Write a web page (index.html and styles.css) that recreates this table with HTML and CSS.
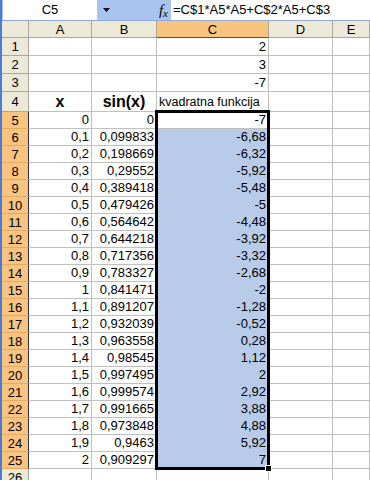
FILE: index.html
```html
<!DOCTYPE html>
<html>
<head>
<meta charset="utf-8">
<link rel="stylesheet" href="styles.css">
</head>
<body>
<div class="app">
  <div class="fbar">
    <div class="namebox">C5</div>
    <div class="nbdrop"><svg width="7" height="4" viewBox="0 0 7 4"><path d="M0 0H7L3.5 4Z" fill="#000"/></svg></div>
    <div class="fxbox"><span class="fx">f<span class="fxx">x</span></span></div>
    <div class="formula">=C$1*A5*A5+C$2*A5+C$3</div>
  </div>
  <div class="stack">
  <div class="sheet">
    <div class="ch corner"></div><div class="ch">A</div><div class="ch">B</div><div class="ch on">C</div><div class="ch">D</div><div class="ch">E</div>

    <div class="rh">1</div><div class="c"></div><div class="c"></div><div class="c">2</div><div class="c"></div><div class="c"></div>
    <div class="rh">2</div><div class="c"></div><div class="c"></div><div class="c">3</div><div class="c"></div><div class="c"></div>
    <div class="rh">3</div><div class="c"></div><div class="c"></div><div class="c">-7</div><div class="c"></div><div class="c"></div>
    <div class="rh">4</div><div class="c hd">x</div><div class="c hd">sin(x)</div><div class="c tx">kvadratna funkcija</div><div class="c"></div><div class="c"></div>

    <div class="rh on">5</div><div class="c">0</div><div class="c">0</div><div class="c">-7</div><div class="c"></div><div class="c"></div>
    <div class="rh on">6</div><div class="c">0,1</div><div class="c">0,099833</div><div class="c sel">-6,68</div><div class="c"></div><div class="c"></div>
    <div class="rh on">7</div><div class="c">0,2</div><div class="c">0,198669</div><div class="c sel">-6,32</div><div class="c"></div><div class="c"></div>
    <div class="rh on">8</div><div class="c">0,3</div><div class="c">0,29552</div><div class="c sel">-5,92</div><div class="c"></div><div class="c"></div>
    <div class="rh on">9</div><div class="c">0,4</div><div class="c">0,389418</div><div class="c sel">-5,48</div><div class="c"></div><div class="c"></div>
    <div class="rh on">10</div><div class="c">0,5</div><div class="c">0,479426</div><div class="c sel">-5</div><div class="c"></div><div class="c"></div>
    <div class="rh on">11</div><div class="c">0,6</div><div class="c">0,564642</div><div class="c sel">-4,48</div><div class="c"></div><div class="c"></div>
    <div class="rh on">12</div><div class="c">0,7</div><div class="c">0,644218</div><div class="c sel">-3,92</div><div class="c"></div><div class="c"></div>
    <div class="rh on">13</div><div class="c">0,8</div><div class="c">0,717356</div><div class="c sel">-3,32</div><div class="c"></div><div class="c"></div>
    <div class="rh on">14</div><div class="c">0,9</div><div class="c">0,783327</div><div class="c sel">-2,68</div><div class="c"></div><div class="c"></div>
    <div class="rh on">15</div><div class="c">1</div><div class="c">0,841471</div><div class="c sel">-2</div><div class="c"></div><div class="c"></div>
    <div class="rh on">16</div><div class="c">1,1</div><div class="c">0,891207</div><div class="c sel">-1,28</div><div class="c"></div><div class="c"></div>
    <div class="rh on">17</div><div class="c">1,2</div><div class="c">0,932039</div><div class="c sel">-0,52</div><div class="c"></div><div class="c"></div>
    <div class="rh on">18</div><div class="c">1,3</div><div class="c">0,963558</div><div class="c sel">0,28</div><div class="c"></div><div class="c"></div>
    <div class="rh on">19</div><div class="c">1,4</div><div class="c">0,98545</div><div class="c sel">1,12</div><div class="c"></div><div class="c"></div>
    <div class="rh on">20</div><div class="c">1,5</div><div class="c">0,997495</div><div class="c sel">2</div><div class="c"></div><div class="c"></div>
    <div class="rh on">21</div><div class="c">1,6</div><div class="c">0,999574</div><div class="c sel">2,92</div><div class="c"></div><div class="c"></div>
    <div class="rh on">22</div><div class="c">1,7</div><div class="c">0,991665</div><div class="c sel">3,88</div><div class="c"></div><div class="c"></div>
    <div class="rh on">23</div><div class="c">1,8</div><div class="c">0,973848</div><div class="c sel">4,88</div><div class="c"></div><div class="c"></div>
    <div class="rh on">24</div><div class="c">1,9</div><div class="c">0,9463</div><div class="c sel">5,92</div><div class="c"></div><div class="c"></div>
    <div class="rh on">25</div><div class="c">2</div><div class="c">0,909297</div><div class="c sel">7</div><div class="c"></div><div class="c"></div>
    <div class="rh">26</div><div class="c"></div><div class="c"></div><div class="c"></div><div class="c"></div><div class="c"></div>
  </div>
  <div class="sheet overlay">
    <div class="selbox"><div class="handle"></div></div>
  </div>
  </div>
</div>
</body>
</html>
```
FILE: styles.css
```css
html, body {
  margin: 0;
  padding: 0;
  background: #fff;
}
body {
  font-family: "Liberation Sans", Arial, sans-serif;
  font-size: 13px;
  color: #000;
}
.app {
  width: 370px;
  height: 480px;
  overflow: hidden;
  box-sizing: border-box;
  border-left: 2px solid #4b7bd4;
}
.fbar {
  display: flex;
  height: 21px;
  box-sizing: border-box;
  background: #a9c4f1;
  border-bottom: 1px solid #8fa9d6;
}
.namebox {
  width: 94px;
  background: #fff;
  text-align: center;
  line-height: 19px;
  margin-left: 1px;
  height: 20px;
}
.nbdrop {
  width: 18px;
  display: flex;
  align-items: center;
  justify-content: center;
}
.fxbox {
  width: 56px;
  display: flex;
  align-items: center;
  justify-content: flex-end;
  padding-right: 3px;
  box-sizing: border-box;
}
.fx {
  font-family: "Liberation Serif", serif;
  font-style: italic;
  font-size: 15px;
  line-height: 1;
}
.fxx {
  font-size: 11px;
  position: relative;
  top: 2px;
}
.formula {
  flex: 1;
  background: #fff;
  line-height: 19px;
  padding-left: 2px;
  height: 20px;
  white-space: nowrap;
}
.stack {
  display: grid;
}
.stack > .sheet {
  grid-area: 1 / 1;
}
.sheet {
  display: grid;
  grid-template-columns: 27px 63px 65px 112px 64px 37px;
  grid-template-rows: 17px 18px 18px 18px 20px repeat(22, 17px);
}
.overlay {
  pointer-events: none;
}
.ch, .rh {
  background: #ece9d8;
  box-sizing: border-box;
  border-right: 1px solid #aca899;
  border-bottom: 1px solid #aca899;
  display: flex;
  align-items: center;
  justify-content: center;
  line-height: 15px;
}
.ch.on {
  background: #f9c47f;
  border-bottom-color: #4a4a6a;
}
.rh.on {
  background: #f9c47f;
  border-right-color: #2c2c50;
  border-bottom-color: #e5ac62;
}
.c {
  box-sizing: border-box;
  border-right: 1px solid #c0c0c0;
  border-bottom: 1px solid #c0c0c0;
  display: flex;
  align-items: flex-end;
  justify-content: flex-end;
  padding: 0 2px 1px 2px;
  line-height: 15px;
  white-space: nowrap;
  overflow: hidden;
}
.c.hd {
  justify-content: center;
  font-weight: bold;
  font-size: 16px;
  line-height: 18px;
  padding-bottom: 0;
}
.c.tx {
  justify-content: flex-start;
  overflow: visible;
  font-size: 12.5px;
}
.c.sel {
  background: #b8cbe8;
  border-bottom-color: #b8cbe8;
}
.selbox {
  grid-column: 4;
  grid-row: 6 / 27;
  margin: -2px -1px -1px -2px;
  border: 3px solid #000;
  position: relative;
}
.handle {
  position: absolute;
  right: -5px;
  bottom: -5px;
  width: 5px;
  height: 5px;
  background: #000;
  border: 1px solid #fff;
}
```
